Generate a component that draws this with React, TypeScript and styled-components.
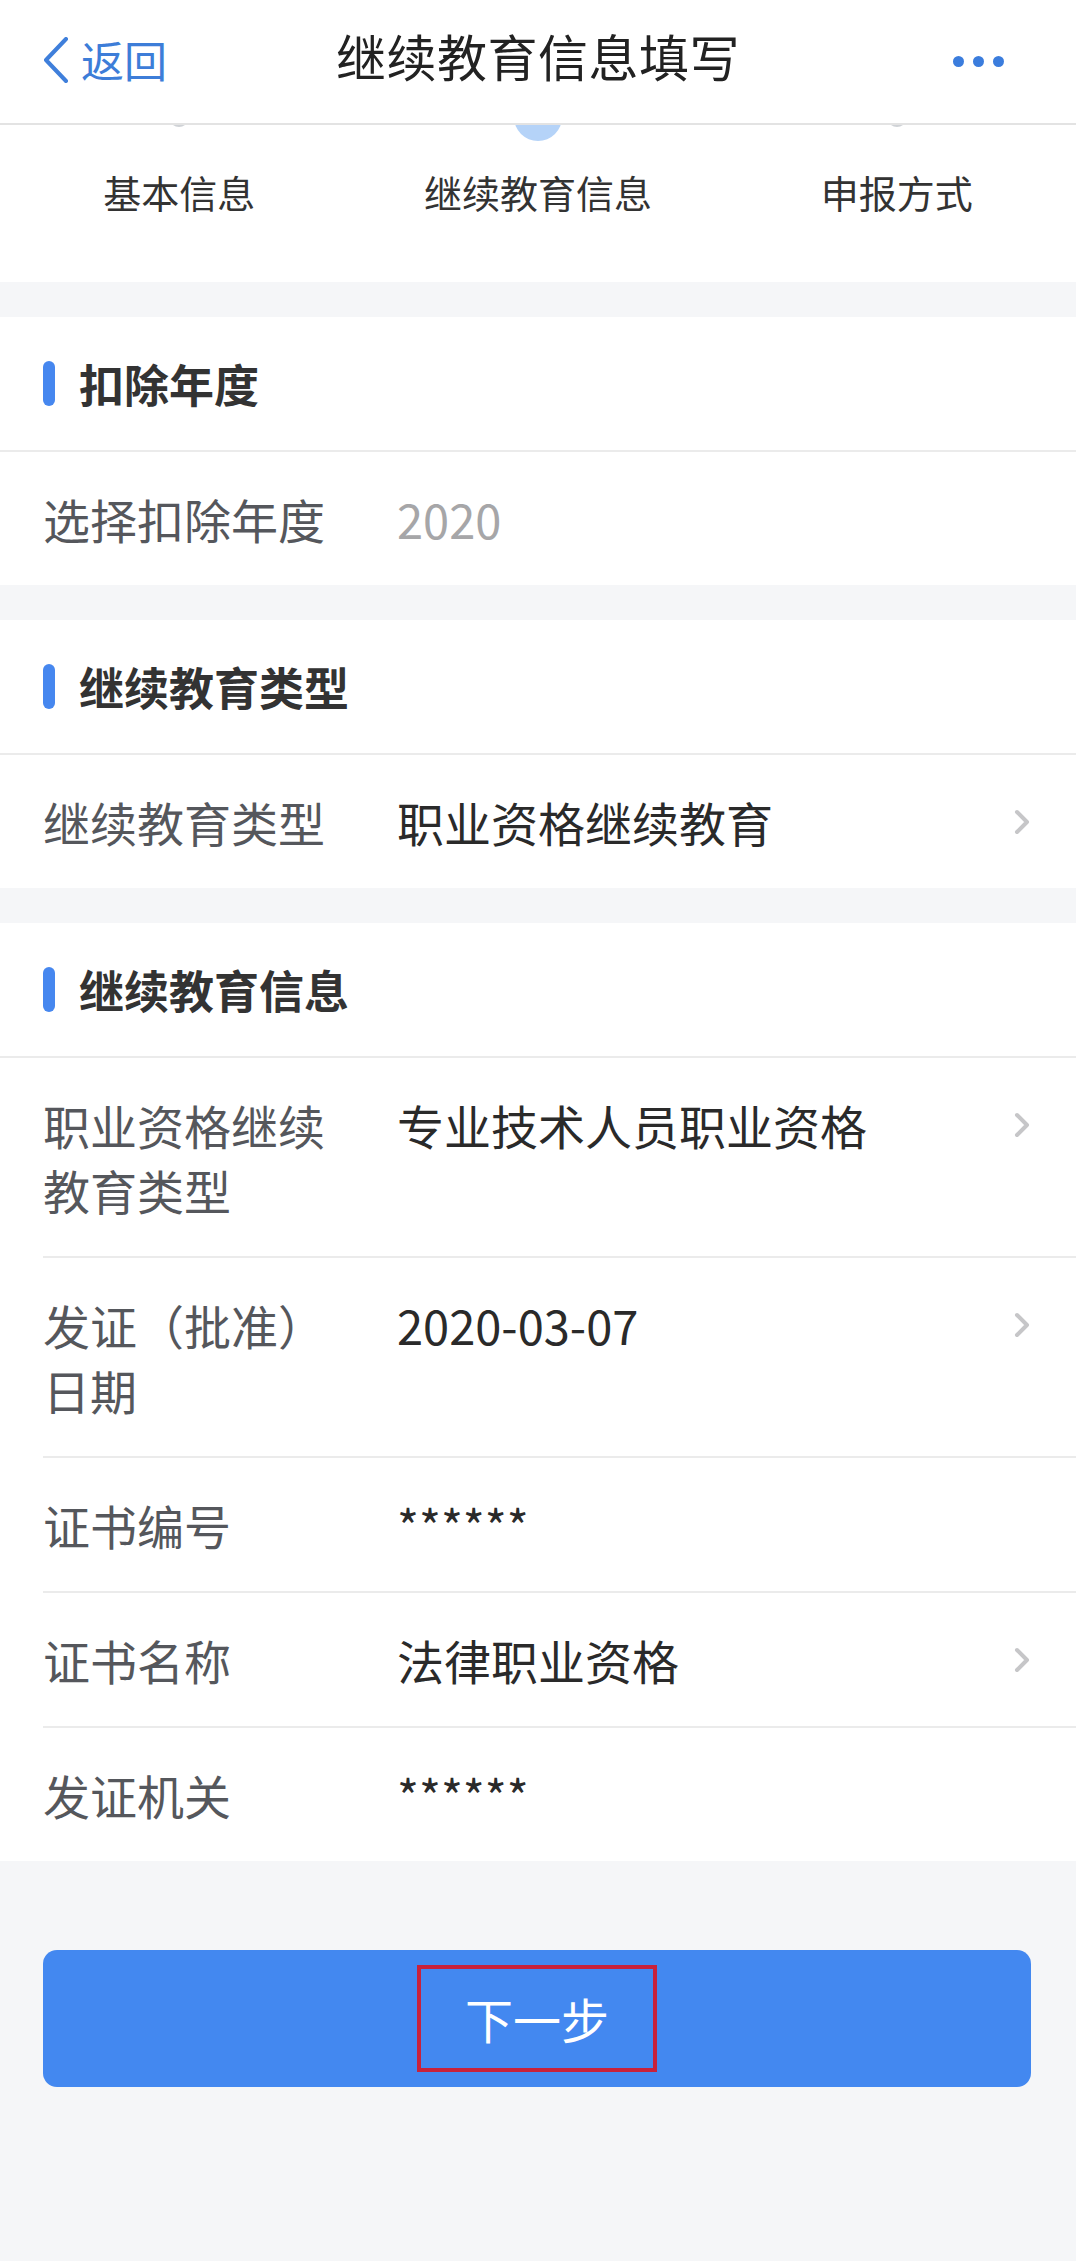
import React from 'react'
import styled, { createGlobalStyle } from 'styled-components'

const GlobalStyle = createGlobalStyle`
  html, body {
    margin: 0;
    padding: 0;
    background: #f5f6f8;
  }
  body {
    font-family: 'Noto Sans CJK SC', 'Noto Sans', sans-serif;
    color: #333;
  }
`

const steps = [
  { label: '基本信息', active: false },
  { label: '继续教育信息', active: true },
  { label: '申报方式', active: false }
]

type Field = {
  label: string
  value: string
  muted?: boolean
  arrow?: boolean
}

const sections: { title: string; fields: Field[] }[] = [
  {
    title: '扣除年度',
    fields: [{ label: '选择扣除年度', value: '2020', muted: true }]
  },
  {
    title: '继续教育类型',
    fields: [{ label: '继续教育类型', value: '职业资格继续教育', arrow: true }]
  },
  {
    title: '继续教育信息',
    fields: [
      { label: '职业资格继续教育类型', value: '专业技术人员职业资格', arrow: true },
      { label: '发证（批准）日期', value: '2020-03-07', arrow: true },
      { label: '证书编号', value: '******' },
      { label: '证书名称', value: '法律职业资格', arrow: true },
      { label: '发证机关', value: '******' }
    ]
  }
]

export default function App() {
  return (
    <Page>
      <GlobalStyle />
      <Header>
        <Back>
          <svg width="26" height="46" viewBox="0 0 26 46">
            <path
              d="M23 2 L3 23 L23 44"
              fill="none"
              stroke="#3f7fdb"
              strokeWidth="4"
              strokeLinecap="round"
              strokeLinejoin="round"
            />
          </svg>
          <span>返回</span>
        </Back>
        <Title>继续教育信息填写</Title>
        <More>
          <Dot />
          <Dot />
          <Dot />
        </More>
      </Header>

      <StepBar>
        {steps.map((s) => (
          <Step key={s.label}>
            <StepMark active={s.active} />
            <StepLabel>{s.label}</StepLabel>
          </Step>
        ))}
      </StepBar>

      {sections.map((sec) => (
        <Section key={sec.title}>
          <SectionTitle>
            <Bar />
            {sec.title}
          </SectionTitle>
          {sec.fields.map((f, i) => (
            <Row key={f.label} inset={i > 0}>
              <Label>{f.label}</Label>
              <Value muted={f.muted}>{f.value}</Value>
              <ArrowSlot>
                {f.arrow && (
                  <svg width="16" height="26" viewBox="0 0 16 26">
                    <path
                      d="M3 3 L13 13 L3 23"
                      fill="none"
                      stroke="#c6c6c8"
                      strokeWidth="4"
                      strokeLinecap="round"
                      strokeLinejoin="round"
                    />
                  </svg>
                )}
              </ArrowSlot>
            </Row>
          ))}
        </Section>
      ))}

      <Footer>
        <NextButton>
          <Marked>下一步</Marked>
        </NextButton>
      </Footer>
    </Page>
  )
}

const Page = styled.div`
  min-height: 2261px;
  background: #f5f6f8;
`

const Header = styled.header`
  position: relative;
  z-index: 2;
  height: 123px;
  display: grid;
  grid-template-columns: 1fr auto 1fr;
  align-items: center;
  background: #fff;
  border-bottom: 2px solid #e3e3e3;
`

const Back = styled.div`
  display: flex;
  align-items: center;
  gap: 12px;
  padding-left: 43px;
  padding-bottom: 4px;
  font-size: 43px;
  color: #3d7dd8;
  span {
    line-height: 1;
  }
`

const Title = styled.div`
  font-size: 50px;
  color: #222;
  line-height: 1;
  letter-spacing: 0.5px;
  padding-bottom: 14px;
`

const More = styled.div`
  display: flex;
  justify-content: flex-end;
  gap: 9px;
  padding-right: 72px;
`

const Dot = styled.span`
  width: 11px;
  height: 11px;
  border-radius: 50%;
  background: #3b7ddd;
`

const StepBar = styled.div`
  display: grid;
  grid-template-columns: repeat(3, 1fr);
  background: #fff;
  overflow: hidden;
  padding-bottom: 64px;
  margin-bottom: 35px;
`

const Step = styled.div`
  display: flex;
  flex-direction: column;
  align-items: center;
`

const StepMark = styled.span<{ active?: boolean }>`
  width: ${(p) => (p.active ? 48 : 20)}px;
  height: ${(p) => (p.active ? 48 : 20)}px;
  border-radius: 50%;
  background: ${(p) => (p.active ? '#b5d3f8' : '#cfd2d6')};
  margin-top: ${(p) => (p.active ? -32 : -18)}px;
  margin-bottom: ${(p) => (p.active ? 24 : 38)}px;
`

const StepLabel = styled.div`
  font-size: 38px;
  line-height: 53px;
  color: #333;
`

const Section = styled.section`
  background: #fff;
  margin-bottom: 35px;
`

const SectionTitle = styled.div`
  height: 133px;
  display: flex;
  align-items: center;
  padding-left: 43px;
  font-size: 45px;
  font-weight: 700;
  color: #333;
`

const Bar = styled.span`
  width: 12px;
  height: 45px;
  border-radius: 6px;
  background: #4687ef;
  margin-right: 24px;
`

const Row = styled.div<{ inset?: boolean }>`
  display: flex;
  align-items: flex-start;
  padding: 34px 46px 34px ${(p) => (p.inset ? 0 : 43)}px;
  margin-left: ${(p) => (p.inset ? 43 : 0)}px;
  border-top: 2px solid #ebebeb;
  font-size: 47px;
  line-height: 65px;
`

const Label = styled.div`
  flex: 0 0 300px;
  margin-right: 54px;
  color: #55575c;
`

const Value = styled.div<{ muted?: boolean }>`
  flex: 1;
  color: ${(p) => (p.muted ? '#a6a6a8' : '#2a2a2a')};
`

const ArrowSlot = styled.div`
  width: 16px;
  height: 65px;
  display: flex;
  align-items: center;
  justify-content: flex-end;
`

const Footer = styled.div`
  padding: 54px 45px 0 43px;
`

const NextButton = styled.button`
  width: 100%;
  height: 137px;
  border: none;
  border-radius: 14px;
  background: #4388f0;
  display: flex;
  align-items: center;
  justify-content: center;
  font-family: inherit;
  cursor: pointer;
`

const Marked = styled.span`
  display: inline-block;
  padding: 16px 44px;
  border: 4px solid #c8213b;
  font-size: 48px;
  line-height: 67px;
  color: #fff;
`
